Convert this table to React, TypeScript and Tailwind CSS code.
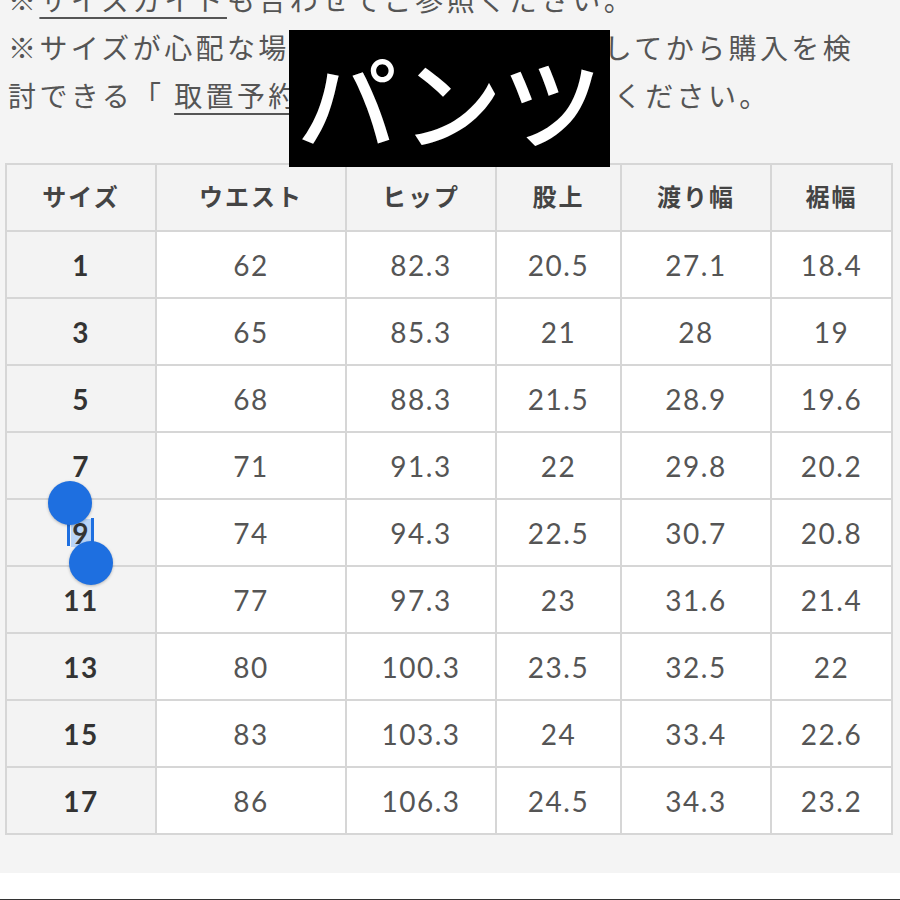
import React from 'react';

const headers = ['サイズ', 'ウエスト', 'ヒップ', '股上', '渡り幅', '裾幅'];

const rows: string[][] = [
  ['1', '62', '82.3', '20.5', '27.1', '18.4'],
  ['3', '65', '85.3', '21', '28', '19'],
  ['5', '68', '88.3', '21.5', '28.9', '19.6'],
  ['7', '71', '91.3', '22', '29.8', '20.2'],
  ['9', '74', '94.3', '22.5', '30.7', '20.8'],
  ['11', '77', '97.3', '23', '31.6', '21.4'],
  ['13', '80', '100.3', '23.5', '32.5', '22'],
  ['15', '83', '103.3', '24', '33.4', '22.6'],
  ['17', '86', '106.3', '24.5', '34.3', '23.2'],
];

const jp = { fontFamily: '"Noto Sans CJK JP", "Noto Sans", sans-serif' };
const num = { fontFamily: 'Lato, "Noto Sans", sans-serif' };

export default function App() {
  return (
    <div className="relative w-[900px] h-[900px] overflow-hidden bg-[#f4f4f4]">
      <div
        className="-mt-[25px] pl-[8px] text-[28px] leading-[48px] tracking-[3.4px] text-[#555] whitespace-nowrap"
        style={jp}
      >
        <div>
          ※<span className="underline underline-offset-[6px] decoration-[2px]">サイズガイド</span>も合わせてご参照ください。
        </div>
        <div>※サイズが心配な場合は、店舗にてご試着してから購入を検</div>
        <div>
          討できる「 <span className="underline underline-offset-[6px] decoration-[2px]">取置予約サービス</span>　」をご利用ください。
        </div>
      </div>

      <div className="mt-[44px] ml-[5px] w-[888px] grid grid-cols-[148px_188px_148px_123px_148px_119px] auto-rows-[65px] gap-[2px] p-[2px] bg-[#d6d6d6]">
        {headers.map((h) => (
          <div
            key={h}
            className="flex items-center justify-center pb-[4px] bg-[#f3f3f3] text-[24px] font-bold tracking-[2px] text-[#444]"
            style={jp}
          >
            {h}
          </div>
        ))}
        {rows.map((r) =>
          r.map((v, i) => (
            <div
              key={r[0] + '-' + i}
              className={
                i === 0
                  ? 'flex items-center justify-center bg-[#f3f3f3] text-[28px] font-bold tracking-[1.5px] text-[#333]'
                  : 'flex items-center justify-center bg-white text-[28px] font-normal tracking-[1.5px] text-[#555]'
              }
              style={num}
            >
              {i === 0 && v === '9' ? (
                <span className="bg-[#b9d4f7] px-[1px] leading-[28px]">{v}</span>
              ) : (
                v
              )}
            </div>
          ))
        )}
      </div>

      <div className="mt-[38px] h-[26px] bg-white" />
      <div className="h-[3px] bg-[#333]" />

      {/* title label over the text */}
      <div
        className="absolute left-[289px] top-[30px] w-[321px] h-[137px] bg-black flex items-center justify-center text-white text-[100px] font-medium leading-none"
        style={jp}
      >
        パンツ
      </div>

      {/* text selection handles */}
      <div className="absolute left-[67px] top-[516px] w-[3px] h-[30px] bg-[#1e6fe0]" />
      <div className="absolute left-[91px] top-[518px] w-[3px] h-[30px] bg-[#1e6fe0]" />
      <div className="absolute left-[48px] top-[481px] w-[44px] h-[44px] rounded-full bg-[#1e6fe0] shadow-[0_1px_3px_rgba(0,0,0,0.25)]" />
      <div className="absolute left-[69px] top-[541px] w-[44px] h-[44px] rounded-full bg-[#1e6fe0] shadow-[0_1px_3px_rgba(0,0,0,0.25)]" />
    </div>
  );
}
